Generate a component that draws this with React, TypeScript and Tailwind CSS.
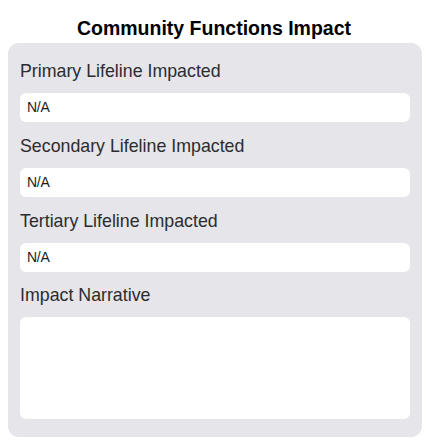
import React from "react";

const font = { fontFamily: '"Liberation Sans", Arial, sans-serif' };

function Field({ label, first }: { label: string; first?: boolean }) {
  return (
    <div className={first ? "" : "mt-[13px]"}>
      <div className="text-[17.8px] leading-[22px] text-[#2c2c2e]">{label}</div>
      <div className="mt-[11px] h-[29px] rounded-[6px] bg-white px-[7px] text-[14px] leading-[29px] text-[#1c1c1e] tracking-[-0.3px]">
        N/A
      </div>
    </div>
  );
}

export default function App() {
  return (
    <div className="w-[428px] h-[444px] bg-white" style={font}>
      <div className="pt-[16px] text-center text-[19.5px] leading-[24px] font-bold text-black">
        Community Functions Impact
      </div>
      <div className="mt-[3px] ml-[8px] w-[414px] rounded-[11px] bg-[#e5e5ea] px-[12px] pt-[17px] pb-[18px]">
        <Field label="Primary Lifeline Impacted" first />
        <Field label="Secondary Lifeline Impacted" />
        <Field label="Tertiary Lifeline Impacted" />
        <div className="mt-[12px]">
          <div className="text-[17.8px] leading-[22px] text-[#2c2c2e]">Impact Narrative</div>
          <div className="mt-[11px] h-[102px] rounded-[6px] bg-white" />
        </div>
      </div>
    </div>
  );
}
